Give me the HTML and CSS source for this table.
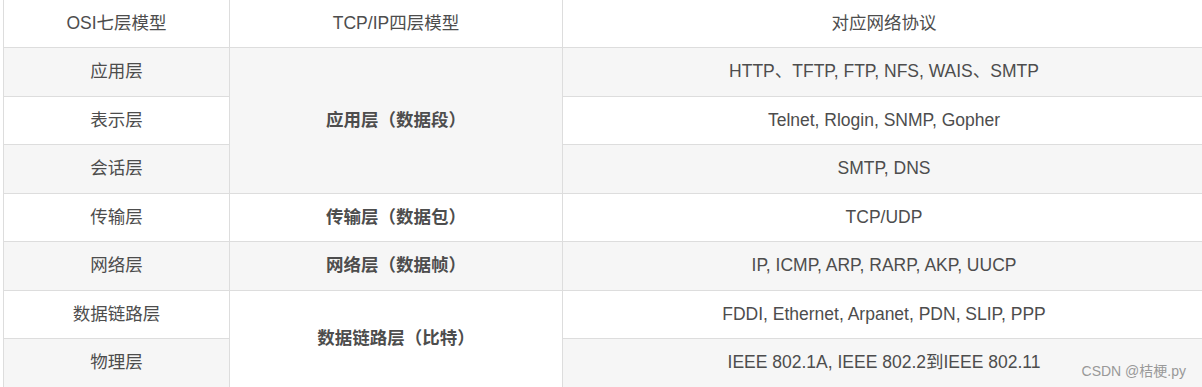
FILE: index.html
```html
<!DOCTYPE html>
<html lang="zh-CN">
<head>
<meta charset="utf-8">
<title>OSI</title>
<link rel="stylesheet" href="styles.css">
</head>
<body>
<div class="wrap">
<table class="osi">
  <colgroup><col class="c1"><col class="c2"><col class="c3"></colgroup>
  <thead>
    <tr><th>OSI七层模型</th><th>TCP/IP四层模型</th><th>对应网络协议</th></tr>
  </thead>
  <tbody>
    <tr class="odd"><td>应用层</td><td rowspan="3" class="strong">应用层（数据段）</td><td>HTTP、TFTP, FTP, NFS, WAIS、SMTP</td></tr>
    <tr class="even"><td>表示层</td><td>Telnet, Rlogin, SNMP, Gopher</td></tr>
    <tr class="odd"><td>会话层</td><td>SMTP, DNS</td></tr>
    <tr class="even"><td>传输层</td><td class="strong">传输层（数据包）</td><td>TCP/UDP</td></tr>
    <tr class="odd"><td>网络层</td><td class="strong">网络层（数据帧）</td><td>IP, ICMP, ARP, RARP, AKP, UUCP</td></tr>
    <tr class="even"><td>数据链路层</td><td rowspan="2" class="strong">数据链路层（比特）</td><td>FDDI, Ethernet, Arpanet, PDN, SLIP, PPP</td></tr>
    <tr class="odd"><td>物理层</td><td>IEEE 802.1A, IEEE 802.2到IEEE 802.11</td></tr>
  </tbody>
</table>
<div class="mark">CSDN @桔梗.py</div>
</div>
</body>
</html>
```

FILE: styles.css
```css
html, body {
  margin: 0;
  padding: 0;
  background: #fff;
  overflow: hidden;
}
.wrap {
  position: relative;
  width: 1202px;
  height: 387px;
  overflow: hidden;
}
.osi {
  border-collapse: collapse;
  table-layout: fixed;
  width: 1202px;
  margin: -1px 0 0 3px;
  font-family: "Liberation Sans", "Noto Sans CJK SC", sans-serif;
  font-size: 17.5px;
  line-height: 24px;
  color: #4d4d4d;
}
.c1 { width: 226px; }
.c2 { width: 333px; }
.c3 { width: 643px; }
.osi th, .osi td {
  border: 1px solid #ddd;
  text-align: center;
  vertical-align: middle;
  padding: 0 8px 1px;
  font-weight: normal;
  height: 47px;
  box-sizing: border-box;
}
.osi thead th { height: 48px; background: #fff; }
.osi tr.odd td { background: #f6f6f6; }
.osi tr.even td { background: #fff; }
.osi tr.even td, .osi tr.odd td { height: 48.5px; }
.osi td.strong { font-weight: bold; }
.mark {
  position: absolute;
  right: 16px;
  bottom: 7px;
  font-family: "Liberation Sans", "Noto Sans CJK SC", sans-serif;
  font-size: 14px;
  color: #999;
}
```
